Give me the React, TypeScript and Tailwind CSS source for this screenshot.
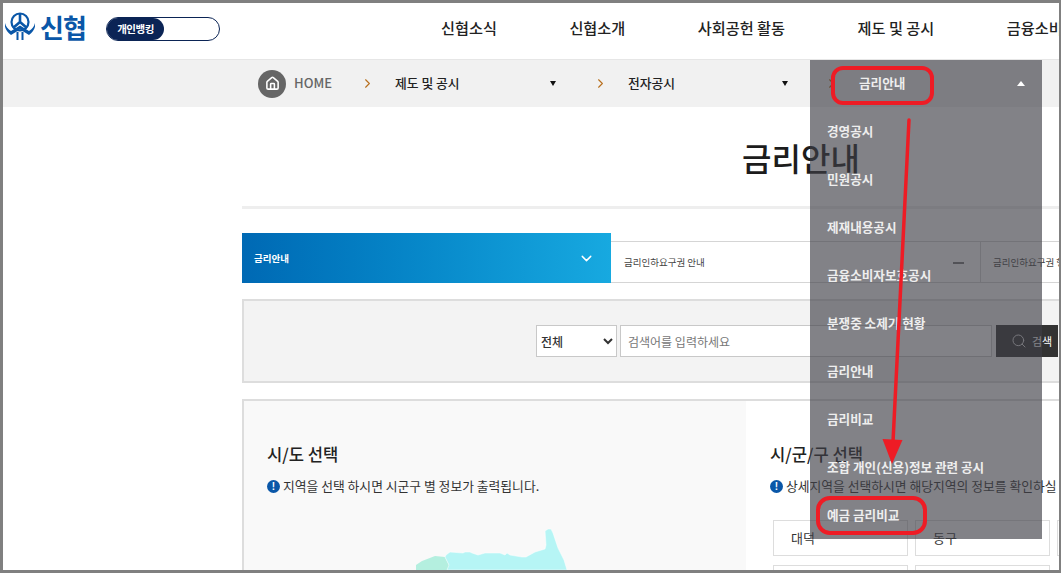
import { ChevronDown, ChevronRight, House, Search } from "lucide-react";

const FONT = "font-['Noto_Sans_CJK_KR','Noto_Sans',sans-serif]";

const menu = ["경영공시", "민원공시", "제재내용공시", "금융소비자보호공시", "분쟁중 소제기 현황", "금리안내", "금리비교", "조합 개인(신용)정보 관련 공시", "예금 금리비교"];
const nav = ["신협소식", "신협소개", "사회공헌 활동", "제도 및 공시", "금융소비자보호"];

function Emblem() {
  return (
    <svg width="30" height="28" viewBox="0 0 30 28" fill="none" stroke="#0a57a8" className="shrink-0 -mt-[2px]">
      <circle cx="15" cy="10" r="8.500" strokeWidth="2.200" />
      <path d="M15 1v9M15 10l-7 6M15 10l7 6" strokeWidth="2.600" />
      <path d="M0 11c1 4 3 6 6 8l9-5.500 9 5.500c3-2 5-4 6-8 1 5-2 9-6 12l-9-5.500-9 5.500c-4-3-7-7-6-12z" fill="#0a57a8" stroke="none" />
      <path d="M12.500 20v8M17.500 20v8" strokeWidth="2" />
    </svg>
  );
}

function Info() {
  return (
    <span className="w-[13px] h-[13px] rounded-full bg-[#0a57a8] text-white text-[10px] font-bold leading-[13px] text-center shrink-0 font-['Liberation_Sans',sans-serif]">!</span>
  );
}

function Crumb({ label, w }: { label: string; w: string }) {
  return (
    <div className={`flex items-center shrink-0 ${w}`}>
      <ChevronRight size={15} strokeWidth={1.800} className="text-[#b8701f] shrink-0" />
      <span className="ml-[20px] mb-[2px] text-[12.800px] font-medium text-[#222] flex-1">{label}</span>
      <span className="w-0 h-0 border-x-[3.500px] border-x-transparent border-t-[5px] border-t-[#111]" />
    </div>
  );
}

export default function App() {
  return (
    <div className={`relative w-[1061px] h-[573px] overflow-hidden bg-white border-t-[3px] border-l-[3px] border-r-[2px] border-b-[3px] border-[#808080] ${FONT}`}>
      <header className="h-[57px] flex items-center pb-[5px] border-b border-[#e6e6e6] whitespace-nowrap overflow-hidden">
        <div className="flex items-center pl-[2px] mb-[3px] shrink-0">
          <Emblem />
          <span className="ml-[5px] text-[26px] leading-[30px] font-bold text-[#0a57a8] tracking-[-1px] w-[50px]">신협</span>
        </div>
        <div className="ml-[16px] w-[114px] h-[24px] rounded-full border border-[#0b2455] shrink-0">
          <div className="w-[57px] h-full rounded-full bg-[#0b2455] text-white text-[10.500px] font-bold leading-[22px] text-center tracking-[-0.5px]">개인뱅킹</div>
        </div>
        <nav className="ml-[221px] mb-[3px] flex gap-[72.500px] text-[15.200px] font-medium text-[#222] shrink-0">
          {nav.map((n) => <span key={n}>{n}</span>)}
        </nav>
      </header>

      <div className="h-[47px] bg-[#f1f1f1] flex items-center pl-[255px] whitespace-nowrap">
        <div className="w-[28px] h-[28px] rounded-full bg-[#666] flex items-center justify-center shrink-0">
          <House size={15} color="#fff" strokeWidth={2.500} />
        </div>
        <span className="ml-[8px] mb-[2px] w-[34px] text-[13px] font-medium text-[#666] shrink-0">HOME</span>
        <div className="w-[32px] shrink-0" />
        <Crumb label="제도 및 공시" w="w-[196px]" />
        <div className="w-[37px] shrink-0" />
        <Crumb label="전자공시" w="w-[195px]" />
        <div className="w-[36px] shrink-0" />
        <ChevronRight size={15} strokeWidth={1.800} className="text-[#b8701f] shrink-0" />
      </div>

      <main className="ml-[239px] w-[1118px]">
        <h1 className="h-[102px] pt-[26px] text-center text-[32px] leading-[48px] font-medium text-[#1c1c1c] border-b-[3px] border-[#eeeeee]">금리안내</h1>

        <div className="mt-[24px] flex items-end h-[50px] whitespace-nowrap">
          <div className="w-[369px] h-[50px] flex items-center justify-between pl-[12px] pr-[16px] bg-gradient-to-r from-[#0069b4] to-[#17a9e0] text-white text-[9.500px] font-bold">
            <span>금리안내</span>
            <ChevronDown size={17} strokeWidth={2} />
          </div>
          <div className="w-[370px] h-[42px] flex items-center justify-between pl-[13px] pr-[16px] border-y border-r border-[#d5d5d5] text-[9.500px] text-[#444] pt-[1px]">
            <span>금리인하요구권 안내</span>
            <span className="w-[11px] h-[2px] bg-[#777]" />
          </div>
          <div className="flex-1 h-[42px] flex items-center pl-[12px] border-y border-[#d5d5d5] text-[9.500px] text-[#444] pt-[1px]">금리인하요구권 행사</div>
        </div>

        <div className="mt-[16px] h-[84px] bg-[#f3f3f3] border-2 border-[#dddddd] flex items-center pl-[292px] gap-[3px]">
          <select className="w-[81px] h-[32px] bg-white border border-[#c8c8c8] text-[12px] font-medium text-[#333] pl-0 outline-none">
            <option>전체</option>
          </select>
          <input placeholder="검색어를 입력하세요" className="w-[372px] h-[32px] bg-white border border-[#c8c8c8] text-[12px] px-[7px] placeholder:text-[#777] outline-none" />
          <button className="ml-[1px] w-[62px] h-[32px] bg-[#333333] text-white text-[11px] flex items-center gap-[5px] pl-[15px]">
            <Search size={16} strokeWidth={1.500} className="text-[#dddddd]" />
            <span>검색</span>
          </button>
        </div>

        <div className="mt-[16px] h-[180px] flex border-l-2 border-t-2 border-[#dddddd] whitespace-nowrap">
          <section className="w-[502px] bg-[#f9f9f9] pl-[23px] pt-[40px] overflow-hidden">
            <h2 className="text-[16.600px] leading-[26px] font-medium text-[#222]">시/도 선택</h2>
            <p className="mt-[10px] flex items-center gap-[3px] text-[12.800px] leading-[18px] text-[#333]"><Info />지역을 선택 하시면 시군구 별 정보가 출력됩니다.</p>
            <svg width="160" height="45" viewBox="410 525 160 45" className="ml-[143px] mt-[30px]">
              <path d="M416 570L416 565 422 561 435 556 445 557 449 565 455 567 460 570Z" fill="#b4efdf" />
              <path d="M447 570L449 565 445 557 446 555 450 552 463 553 465 552 470 552 472 553 478 555 485 553 500 553 505 555 507 553 510 555 522 557 526 557 535 552 545 549 546 545 545 531 548 529 551 529 553 533 558 548 564 560 567 570Z" fill="#b6f5f5" stroke="#ffffff" strokeWidth="0.500" />
            </svg>
          </section>
          <section className="flex-1 pl-[24px] pt-[40px] overflow-hidden">
            <h2 className="text-[16.600px] leading-[26px] font-medium text-[#222]">시/군/구 선택</h2>
            <p className="mt-[10px] flex items-center gap-[3px] text-[12.800px] leading-[18px] text-[#333]"><Info />상세지역을 선택하시면 해당지역의 정보를 확인하실 수 있습니다.</p>
            <div className="mt-[25px] ml-[3px] grid grid-cols-[135px_135px_135px] gap-x-[7px] gap-y-[9px]">
              {["대덕", "동구", "서구", "유성", ""].map((t, i) => (
                <div key={i} className="h-[36px] border border-[#dddddd] pl-[17px] text-[13px] leading-[34px] text-[#333]">{t}</div>
              ))}
            </div>
          </section>
        </div>
      </main>

      <div className="absolute left-[807px] top-[57px] w-[232px] h-[479px] bg-[#3f3f46]/65 text-[#eeeeee] text-[12.600px] font-bold whitespace-nowrap">
        <div className="h-[47px] flex items-center justify-between pl-[49px] pr-[17px]">
          <span className="mb-[1px]">금리안내</span>
          <span className="w-0 h-0 border-x-[4px] border-x-transparent border-b-[5px] border-b-white" />
        </div>
        <ul className="pl-[17px]">
          {menu.map((m) => <li key={m} className="h-[48px] leading-[47px]">{m}</li>)}
        </ul>
      </div>

      <svg className="absolute left-[-3px] top-[-3px] pointer-events-none" width="1061" height="573" fill="none">
        <rect x="833" y="68" width="99" height="35" rx="10" stroke="#ee1c25" strokeWidth="4" />
        <rect x="818" y="498" width="107" height="35" rx="12" stroke="#ee1c25" strokeWidth="4" />
        <path d="M909 120 L893 442" stroke="#ee1c25" strokeWidth="3.500" strokeLinecap="round" />
        <path d="M882.500 439 L902.500 440 L892 464 Z" fill="#ee1c25" />
      </svg>
    </div>
  );
}
